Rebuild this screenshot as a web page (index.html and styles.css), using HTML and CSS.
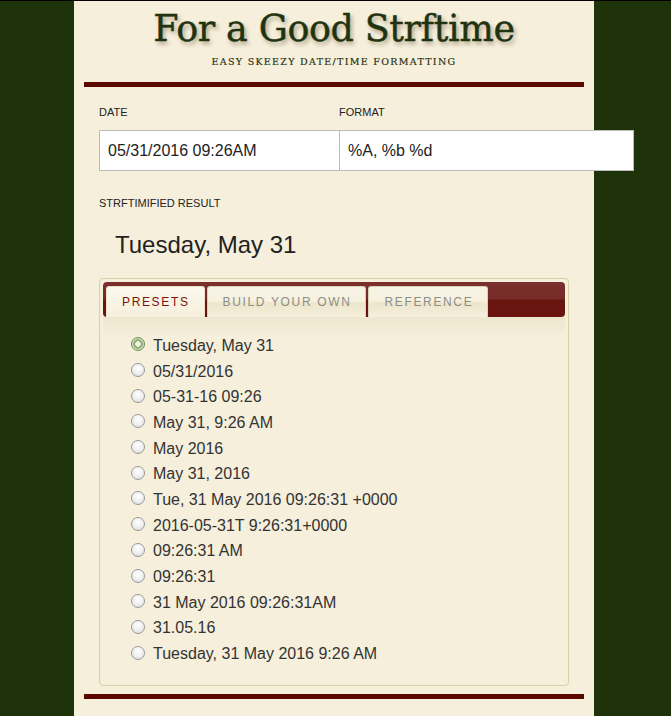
FILE: index.html
```html
<!DOCTYPE html>
<html>
<head>
<meta charset="utf-8">
<link rel="stylesheet" href="styles.css">
</head>
<body>
<div class="page">
  <header class="masthead">
    <h1 class="title">For a Good Strftime</h1>
    <p class="subtitle">Easy skeezy date/time formatting</p>
  </header>
  <div class="rule"></div>
  <div class="fields">
    <div class="field">
      <label class="label">Date</label>
      <input class="input" type="text" value="05/31/2016 09:26AM">
    </div>
    <div class="field">
      <label class="label">Format</label>
      <input class="input" type="text" value="%A, %b %d">
    </div>
  </div>
  <div class="result-block">
    <div class="label">Strftimified result</div>
    <div class="result">Tuesday, May 31</div>
  </div>
  <div class="tabs">
    <ul class="tab-nav">
      <li class="tab active">Presets</li>
      <li class="tab">Build your own</li>
      <li class="tab">Reference</li>
    </ul>
    <div class="panel">
      <ul class="presets">
        <li><span class="radio checked"></span>Tuesday, May 31</li>
        <li><span class="radio"></span>05/31/2016</li>
        <li><span class="radio"></span>05-31-16 09:26</li>
        <li><span class="radio"></span>May 31, 9:26 AM</li>
        <li><span class="radio"></span>May 2016</li>
        <li><span class="radio"></span>May 31, 2016</li>
        <li><span class="radio"></span>Tue, 31 May 2016 09:26:31 +0000</li>
        <li><span class="radio"></span>2016-05-31T 9:26:31+0000</li>
        <li><span class="radio"></span>09:26:31 AM</li>
        <li><span class="radio"></span>09:26:31</li>
        <li><span class="radio"></span>31 May 2016 09:26:31AM</li>
        <li><span class="radio"></span>31.05.16</li>
        <li><span class="radio"></span>Tuesday, 31 May 2016 9:26 AM</li>
      </ul>
    </div>
  </div>
  <div class="rule bottom"></div>
</div>
</body>
</html>
```

FILE: styles.css
```css
html, body {
  margin: 0;
  padding: 0;
  background: #1f330a;
}
body {
  border-top: 1px solid #000;
  font-family: "Liberation Sans", Arial, sans-serif;
  color: #222;
  overflow: hidden;
}
.page {
  box-sizing: border-box;
  width: 520px;
  margin: 0 0 0 74px;
  padding: 0 10px 10px;
  background: #f5efdc;
  height: 715px;
}
.masthead {
  text-align: center;
  padding-top: 8px;
}
.title {
  margin: 0;
  font-family: "DejaVu Serif", "Liberation Serif", serif;
  font-weight: normal;
  font-size: 36.5px;
  line-height: 40px;
  color: #1f3310;
  -webkit-text-stroke: 0.4px #1f3310;
  text-shadow: 2px 3px 4px rgba(80, 60, 20, 0.45);
  letter-spacing: -0.4px;
}
.subtitle {
  margin: 7px 0 0;
  font-family: "DejaVu Serif", "Liberation Serif", serif;
  font-size: 9.5px;
  text-transform: uppercase;
  letter-spacing: 1.3px;
  color: #2a3310;
  -webkit-text-stroke: 0.2px #2a3310;
  line-height: 12px;
}
.rule {
  height: 5px;
  background: #5a0800;
  margin-top: 14px;
}
.rule.bottom {
  margin-top: 8px;
}
.fields {
  display: grid;
  grid-template-columns: 240px 240px;
  padding: 0 15px;
  margin-top: 19px;
}
.field {
  display: flex;
  flex-direction: column;
}
.label {
  display: block;
  font-size: 11px;
  text-transform: uppercase;
  color: #222;
  line-height: 12px;
  margin-bottom: 12px;
}
.input {
  box-sizing: border-box;
  width: 295px;
  height: 41px;
  border: 1px solid #bbb;
  background: #fff;
  font-family: "Liberation Sans", Arial, sans-serif;
  font-size: 16px;
  color: #222;
  padding: 0 8px;
  margin: 0;
  outline: none;
}
.result-block {
  padding: 0 15px;
  margin-top: 26px;
}
.result {
  font-size: 24px;
  color: #222;
  padding-left: 16px;
  margin-top: 22px;
  line-height: 28px;
}
.tabs {
  margin: 19px 15px 0;
  border: 1px solid #d8cfa5;
  border-radius: 4px;
  padding: 3px;
  background: #f5efdc;
}
.tab-nav {
  list-style: none;
  margin: 0;
  padding: 4px 2px 0 3px;
  display: flex;
  gap: 2px;
  border-radius: 4px;
  background: linear-gradient(#7a2f2c 0%, #762b28 48%, #68140f 52%, #6a1410 100%);
}
.tab {
  height: 30px;
  line-height: 31px;
  padding: 0 14px 0 15px;
  font-size: 12px;
  text-transform: uppercase;
  letter-spacing: 1.65px;
  color: #8b8e85;
  background: linear-gradient(#f8f4e6 0%, #f6f1e0 45%, #ede6cc 55%, #f5efdd 100%);
  border: 1px solid #d9d2b8;
  border-bottom: none;
  border-radius: 3px 3px 0 0;
}
.tab.active {
  color: #7a1408;
  background: linear-gradient(#fbf8ee, #f5efdc);
  border-color: #e9e2c8;
}
.panel {
  background: linear-gradient(#ede7cf 0px, #f5efdc 20px);
  padding: 16px 16px 15px 28px;
}
.presets {
  list-style: none;
  margin: 0;
  padding: 0;
}
.presets li {
  display: flex;
  align-items: center;
  font-size: 16px;
  color: #333;
  height: 25.7px;
}
.radio {
  box-sizing: border-box;
  width: 14px;
  height: 14px;
  border-radius: 50%;
  border: 1px solid #9a9a9a;
  background: radial-gradient(circle at 50% 35%, #fff 0%, #f0f0f0 50%, #d6d6d6 100%);
  margin-right: 8px;
  margin-top: -3px;
  flex: none;
}
.radio.checked {
  border: 1px solid #6b8f52;
  background: radial-gradient(circle, #eef2e4 0 2.5px, #8fb070 3px 4.5px, #d0dcc0 5px);
}
```
